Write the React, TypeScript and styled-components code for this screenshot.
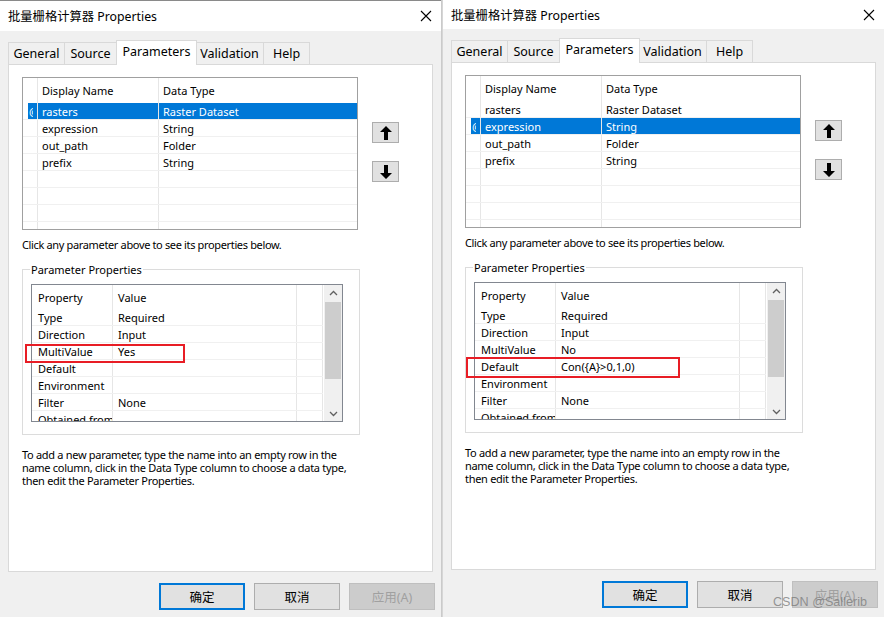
import React from 'react';
import styled, { createGlobalStyle } from 'styled-components';

const GlobalStyle = createGlobalStyle`
  html, body { margin: 0; padding: 0; background: #f0f0f0; }
  body { font-family: "Noto Sans", "Noto Sans CJK SC", sans-serif; color: #000; }
  * { box-sizing: border-box; }
`;

interface Param {
  name: string;
  type: string;
}

interface Prop {
  label: string;
  value: string;
}

interface Box {
  left: number;
  top: number;
  width: number;
  height: number;
}

const params: Param[] = [
  { name: 'rasters', type: 'Raster Dataset' },
  { name: 'expression', type: 'String' },
  { name: 'out_path', type: 'Folder' },
  { name: 'prefix', type: 'String' },
];

const tabs = [
  { label: 'General', width: 56 },
  { label: 'Source', width: 52 },
  { label: 'Parameters', width: 80 },
  { label: 'Validation', width: 68 },
  { label: 'Help', width: 46 },
];

const Screen = styled.div`
  position: relative;
  display: flex;
  width: 884px;
  height: 617px;
  overflow: hidden;
`;

const Shadow = styled.div`
  width: 2px;
  background: linear-gradient(to right, #c4c4c4, #dcdcdc);
`;

const Dialog = styled.div<{ $titleHeight: number; $topLine: boolean }>`
  width: 441px;
  height: 617px;
  background: #f0f0f0;
  display: flex;
  flex-direction: column;
  border-top: ${p => (p.$topLine ? '1px solid #8a8a8a' : 'none')};

  & > header {
    height: ${p => p.$titleHeight}px;
  }
`;

const TitleBar = styled.header`
  background: #fff;
  display: flex;
  align-items: center;
  justify-content: space-between;
  padding: 0 9px 0 8px;
  font-size: 12px;
  flex-shrink: 0;
`;

const TitleText = styled.span`
  font-family: "Noto Sans", "Noto Sans CJK SC", sans-serif;
  font-size: 12.3px;
`;

const TabStrip = styled.div`
  display: flex;
  align-items: flex-end;
  height: 24px;
  margin: 9px 0 0 9px;
`;

const Tab = styled.div<{ $active: boolean }>`
  height: ${p => (p.$active ? 25 : 22)}px;
  margin: 0 ${p => (p.$active ? -1 : 0)}px ${p => (p.$active ? -1 : 0)}px;
  position: relative;
  z-index: ${p => (p.$active ? 2 : 1)};
  background: ${p => (p.$active ? '#fff' : '#f0f0f0')};
  border: 1px solid #d9d9d9;
  border-bottom: none;
  margin-left: -1px;
  display: flex;
  align-items: ${p => (p.$active ? 'flex-start' : 'center')};
  padding-top: ${p => (p.$active ? 2 : 0)}px;
  justify-content: center;
  font-size: 12.5px;
`;

const Panel = styled.div`
  position: relative;
  margin-left: 8px;
  width: 425px;
  height: 508px;
  background: #fff;
  border: 1px solid #d9d9d9;
  padding: 12px 13px;
  font-size: 11px;
`;

const TopRow = styled.div`
  display: flex;
`;

const ParamGrid = styled.div`
  width: 336px;
  height: 153px;
  border: 1px solid #a0a0a0;
  overflow: hidden;
`;

const GridRow = styled.div<{ $header?: boolean; $selected?: boolean }>`
  display: grid;
  grid-template-columns: 15px 121px 1fr;
  height: ${p => (p.$header ? 25 : 17)}px;
  border-bottom: ${p => (p.$header ? 'none' : '1px solid #f0f0f0')};
  color: ${p => (p.$selected ? '#fff' : '#000')};
`;

const Cell = styled.div<{ $selected?: boolean; $pad?: number }>`
  border-right: 1px solid #e6e6e6;
  display: flex;
  align-items: center;
  padding-left: ${p => p.$pad ?? 4}px;
  white-space: nowrap;
  overflow: hidden;
  background: ${p => (p.$selected ? '#0078d7' : 'transparent')};
  &:last-child { border-right: none; }
`;

const RowHead = styled.div<{ $selected?: boolean }>`
  border-right: 1px solid #e6e6e6;
  padding-left: 5px;
  overflow: hidden;
  & > span {
    display: flex;
    align-items: center;
    height: 100%;
    padding-left: 1px;
    background: ${p => (p.$selected ? '#0078d7' : 'transparent')};
    color: #fff;
  }
`;

const Clip = styled.i`
  display: inline-block;
  width: 4px;
  overflow: hidden;
  font-style: normal;
  white-space: nowrap;
`;

const SideButtons = styled.div`
  display: flex;
  flex-direction: column;
  gap: 18px;
  margin-left: 14px;
  padding-top: 45px;
`;

const ArrowButton = styled.div`
  width: 27px;
  height: 21px;
  background: #e1e1e1;
  border: 1px solid #adadad;
  display: flex;
  align-items: center;
  justify-content: center;
`;

const Hint = styled.div`
  margin-top: 8px;
  line-height: 13px;
  letter-spacing: -0.35px;
`;

const GroupBox = styled.fieldset`
  margin: 12px 0 0;
  width: 338px;
  height: 172px;
  border: 1px solid #dcdcdc;
  padding: 8px 0 0 8px;
  min-width: 0;
`;

const Legend = styled.legend`
  margin-left: -1px;
  padding: 0 1px;
  font-size: 11px;
  line-height: 13px;
`;

const PropGrid = styled.div`
  position: relative;
  width: 312px;
  height: 138px;
  border: 1px solid #828790;
  overflow: hidden;
`;

const PropRow = styled.div<{ $header?: boolean }>`
  display: grid;
  grid-template-columns: 81px 184px 26px;
  height: ${p => (p.$header ? 24 : 17)}px;
  border-bottom: ${p => (p.$header ? 'none' : '1px solid #f0f0f0')};
  width: 291px;
`;

const PropCell = styled.div<{ $pad?: number }>`
  border-right: 1px solid #e6e6e6;
  display: flex;
  align-items: center;
  padding-left: ${p => p.$pad ?? 6}px;
  white-space: nowrap;
  overflow: hidden;
`;

const ScrollBar = styled.div`
  position: absolute;
  top: 0;
  right: 0;
  width: 18px;
  height: 100%;
  background: #f0f0f0;
  display: flex;
  flex-direction: column;
  align-items: center;
  justify-content: space-between;
  padding: 5px 0 4px;
`;

const Thumb = styled.div`
  position: absolute;
  top: 17px;
  left: 1px;
  width: 16px;
  height: 77px;
  background: #cdcdcd;
`;

const Note = styled.p`
  margin: 13px 0 0;
  line-height: 13px;
  width: 332px;
  letter-spacing: -0.3px;
`;

const Highlight = styled.div`
  position: absolute;
  border: 2px solid #e81d25;
  pointer-events: none;
`;

const ButtonRow = styled.div`
  display: flex;
  justify-content: flex-end;
  gap: 9px;
  margin-top: 11px;
  padding-right: 6px;
`;

const DlgButton = styled.div<{ $variant?: 'default' | 'disabled' }>`
  width: 86px;
  height: 27px;
  display: flex;
  align-items: center;
  justify-content: center;
  font-size: 12.5px;
  font-family: "Noto Sans", "Noto Sans CJK SC", sans-serif;
  background: ${p => (p.$variant === 'disabled' ? '#cccccc' : '#e1e1e1')};
  color: ${p => (p.$variant === 'disabled' ? '#a0a0a0' : '#000')};
  border: ${p =>
    p.$variant === 'default'
      ? '2px solid #0078d7'
      : p.$variant === 'disabled'
      ? '1px solid #bfbfbf'
      : '1px solid #adadad'};
`;

const Watermark = styled.div`
  position: absolute;
  left: 773px;
  top: 595px;
  font-family: "Liberation Sans", Arial, sans-serif;
  font-size: 12.6px;
  color: rgba(120, 120, 120, 0.75);
`;

const CloseIcon = () => (
  <svg width="12" height="12" viewBox="0 0 12 12">
    <path d="M1 1 L11 11 M11 1 L1 11" stroke="#000" strokeWidth="1.1" fill="none" />
  </svg>
);

const Arrow = ({ down }: { down?: boolean }) => (
  <svg width="12" height="14" viewBox="0 0 12 14" style={{ transform: down ? 'rotate(180deg)' : undefined }}>
    <path d="M6 0 L12 6 L8 6 L8 14 L4 14 L4 6 L0 6 Z" fill="#000" />
  </svg>
);

const Chevron = ({ down }: { down?: boolean }) => (
  <svg width="9" height="6" viewBox="0 0 9 6">
    <path d={down ? 'M1 1 L4.5 4.5 L8 1' : 'M1 5 L4.5 1.5 L8 5'} stroke="#606060" strokeWidth="1.3" fill="none" />
  </svg>
);

interface PropsDialogProps {
  titleHeight: number;
  topLine: boolean;
  selected: number;
  multiValue: string;
  defaultValue: string;
  highlight: Box;
}

const PropertiesDialog: React.FC<PropsDialogProps> = ({ titleHeight, topLine, selected, multiValue, defaultValue, highlight }) => {
  const props: Prop[] = [
    { label: 'Type', value: 'Required' },
    { label: 'Direction', value: 'Input' },
    { label: 'MultiValue', value: multiValue },
    { label: 'Default', value: defaultValue },
    { label: 'Environment', value: '' },
    { label: 'Filter', value: 'None' },
    { label: 'Obtained from', value: '' },
  ];
  const emptyRows = [0, 1, 2, 3];

  return (
    <Dialog $titleHeight={titleHeight} $topLine={topLine}>
      <TitleBar>
        <TitleText>批量栅格计算器 Properties</TitleText>
        <CloseIcon />
      </TitleBar>
      <TabStrip>
        {tabs.map(t => (
          <Tab key={t.label} $active={t.label === 'Parameters'} style={{ width: t.width + 1 }}>
            {t.label}
          </Tab>
        ))}
      </TabStrip>
      <Panel>
        <TopRow>
          <ParamGrid>
            <GridRow $header>
              <RowHead />
              <Cell>Display Name</Cell>
              <Cell>Data Type</Cell>
            </GridRow>
            {params.map((p, i) => (
              <GridRow key={p.name} $selected={i === selected}>
                <RowHead $selected={i === selected}>
                  <span>{i === selected && <Clip>@</Clip>}</span>
                </RowHead>
                <Cell $selected={i === selected}>{p.name}</Cell>
                <Cell $selected={i === selected}>{p.type}</Cell>
              </GridRow>
            ))}
            {emptyRows.map(r => (
              <GridRow key={r}>
                <RowHead />
                <Cell />
                <Cell />
              </GridRow>
            ))}
          </ParamGrid>
          <SideButtons>
            <ArrowButton>
              <Arrow />
            </ArrowButton>
            <ArrowButton>
              <Arrow down />
            </ArrowButton>
          </SideButtons>
        </TopRow>
        <Hint>Click any parameter above to see its properties below.</Hint>
        <GroupBox>
          <Legend>Parameter Properties</Legend>
          <PropGrid>
            <PropRow $header>
              <PropCell>Property</PropCell>
              <PropCell $pad={5}>Value</PropCell>
              <PropCell />
            </PropRow>
            {props.map(p => (
              <PropRow key={p.label}>
                <PropCell>{p.label}</PropCell>
                <PropCell $pad={5}>{p.value}</PropCell>
                <PropCell />
              </PropRow>
            ))}
            <ScrollBar>
              <Chevron />
              <Thumb />
              <Chevron down />
            </ScrollBar>
          </PropGrid>
        </GroupBox>
        <Note>
          To add a new parameter, type the name into an empty row in the name column, click in the Data Type column to choose a data type, then edit the Parameter Properties.
        </Note>
        <Highlight
          style={{ left: highlight.left, top: highlight.top, width: highlight.width, height: highlight.height }}
        />
      </Panel>
      <ButtonRow>
        <DlgButton $variant="default">确定</DlgButton>
        <DlgButton>取消</DlgButton>
        <DlgButton $variant="disabled">应用(A)</DlgButton>
      </ButtonRow>
    </Dialog>
  );
};

const App: React.FC = () => (
  <>
    <GlobalStyle />
    <Screen>
      <PropertiesDialog
        titleHeight={30}
        topLine
        selected={0}
        multiValue="Yes"
        defaultValue=""
        highlight={{ left: 16, top: 279, width: 160, height: 19 }}
      />
      <Shadow />
      <PropertiesDialog
        titleHeight={29}
        topLine={false}
        selected={1}
        multiValue="No"
        defaultValue="Con({A}>0,1,0)"
        highlight={{ left: 14, top: 294, width: 214, height: 21 }}
      />
      <Watermark>CSDN @Sallerib</Watermark>
    </Screen>
  </>
);

export default App;
